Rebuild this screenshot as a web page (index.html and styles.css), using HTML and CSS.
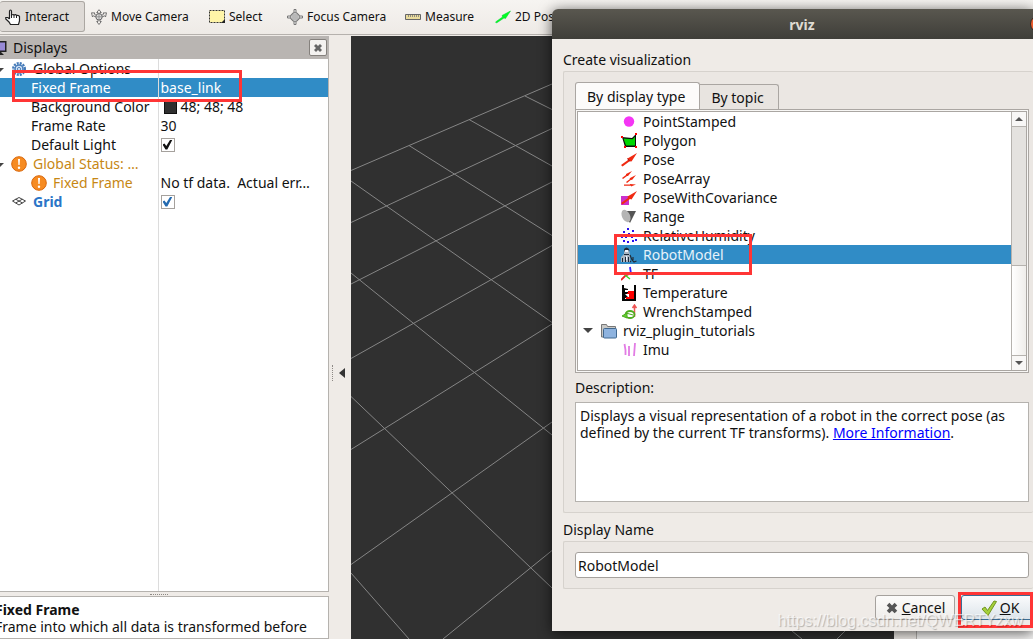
FILE: index.html
```html
<!DOCTYPE html>
<html lang="en">
<head>
<meta charset="utf-8">
<title>rviz</title>
<link rel="stylesheet" href="styles.css">
</head>
<body>
<div class="window">
  <header class="toolbar">
    <button class="tool tool-active" type="button">
      <svg class="icon" viewBox="0 0 16 16"><path d="M4.500 10V2.500q0-1.500 1-1.500t1 1.500V6q2-1 2.500 0q2-1 2.500 .5q2.500-.5 3 1V12l-1 3.500H5.500L4 13L.8 10V8.500h2l1.700 1.500" fill="#fff" stroke="#222" stroke-width="1.200"/><path d="M6.500 5v4M9 6v3M11.500 6.500V9" stroke="#222"/></svg>Interact</button>
    <button class="tool" type="button">
      <svg class="icon" viewBox="0 0 16 16"><path d="M8 .7L10.300 3.500H9V5h-2V3.500H5.700zM8 15.500L5.700 12.500H7V10.500h2v2h1.300zM.5 3.800L4 4l-.8 1L5.500 6.500l-1 1.500L2.500 6.700L1.500 8zM15.500 3.800L12 4l.8 1L10.500 6.500l1 1.500L13.500 6.700L14.500 8z" fill="#f2efec" stroke="#666" stroke-width=".9"/><circle cx="8" cy="7.800" r="3.200" fill="#ddd" stroke="#666"/><path d="M8 4.800v6M5 7.800h6" stroke="#888" stroke-width=".8"/></svg>Move Camera</button>
    <button class="tool" type="button">
      <svg class="icon" viewBox="0 0 16 16"><rect x=".5" y="1.500" width="15" height="12" fill="#fff5a8" stroke="#333" stroke-dasharray="2 1"/><path d="M12 14l4-4v4z" fill="#222"/></svg>Select</button>
    <button class="tool" type="button">
      <svg class="icon" viewBox="0 0 16 16"><path d="M7 .5h2v3l3.500 3.500h3v2h-3L9 12.500v3H7v-3L3.500 9h-3V7h3L7 3.500z" fill="#eee" stroke="#777"/><circle cx="8" cy="8" r="4.500" fill="none" stroke="#777"/><path d="M8 3v10M3 8h10M6 5v6M10 5v6M5 6h6M5 10h6" stroke="#999" stroke-width=".8"/></svg>Focus Camera</button>
    <button class="tool" type="button">
      <svg class="icon" viewBox="0 0 16 16"><path d="M.5 5.500h15v5H.5z" fill="#eadc9c" stroke="#666"/><path d="M3.500 6v2M5.500 6v2M7.500 6v2M9.500 6v2M11.500 6v2M13.500 6v2" stroke="#777" stroke-width=".8"/></svg>Measure</button>
    <button class="tool" type="button">
      <svg class="icon" viewBox="0 0 16 16"><path d="M.5 13l7-5-.5-1.500L15.500 2L10.500 9.500L9 9l-7.500 5z" fill="#0f2" stroke="#0c3" stroke-width=".5"/></svg>2D Pose Estimate</button>
  </header>

  <div class="workspace">
    <aside class="dock">
      <div class="dock-title">
        <svg class="icon" viewBox="0 0 16 16"><rect x=".5" y="1" width="15" height="11" fill="#222"/><path d="M2 2.500h6v8H2z" fill="#8fcf7d"/><path d="M8 2.500h6v8H8z" fill="#9789d6"/><path d="M7 12h3l3 3H4z" fill="#222"/></svg>
        <h2>Displays</h2>
        <button class="close" type="button" aria-label="Close Displays"><svg class="cross" viewBox="0 0 10 10"><path d="M1 3l2-2 2 2 2-2 2 2-2 2 2 2-2 2-2-2-2 2-2-2 2-2z" fill="#666"/></svg></button>
      </div>
      <table class="properties">
        <tbody>
          <tr><td class="top"><span class="arrow"></span><svg class="icon" viewBox="0 0 16 16"><circle cx="8" cy="8" r="5.800" fill="none" stroke="#4379b8" stroke-width="2.400" stroke-dasharray="2 1.040"/><circle cx="8" cy="8" r="4" fill="#cfe0f5" stroke="#4379b8" stroke-width="1.500"/><circle cx="8" cy="8" r="1.500" fill="#fff" stroke="#4379b8"/></svg>Global Options</td><td></td></tr>
          <tr class="selected"><td class="leaf">Fixed Frame</td><td>base_link</td></tr>
          <tr><td class="leaf">Background Color</td><td><span class="swatch"></span>48; 48; 48</td></tr>
          <tr><td class="leaf">Frame Rate</td><td>30</td></tr>
          <tr><td class="leaf"><label for="light">Default Light</label></td><td><input class="check" type="checkbox" id="light" checked></td></tr>
          <tr class="warning"><td class="top"><span class="arrow"></span><svg class="icon" viewBox="0 0 16 16"><circle cx="8" cy="8" r="7.300" fill="#f68b21" stroke="#d9660a"/><path d="M7 3h2l-.4 6H7.400z" fill="#fff"/><circle cx="8" cy="11.700" r="1.200" fill="#fff"/></svg>Global Status: …</td><td></td></tr>
          <tr class="warning"><td class="child"><svg class="icon" viewBox="0 0 16 16"><circle cx="8" cy="8" r="7.300" fill="#f68b21" stroke="#d9660a"/><path d="M7 3h2l-.4 6H7.400z" fill="#fff"/><circle cx="8" cy="11.700" r="1.200" fill="#fff"/></svg>Fixed Frame</td><td class="value">No tf data.&nbsp; Actual err…</td></tr>
          <tr><td class="top"><span class="arrow arrow-none"></span><svg class="icon" viewBox="0 0 16 16"><path d="M1.500 7L8 3.500L14.500 7L8 11zM4.700 5.200L11.500 9M11.300 5.200L4.700 9" fill="none" stroke="#444"/></svg><label class="grid-name" for="grid">Grid</label></td><td><input class="check check-blue" type="checkbox" id="grid" checked></td></tr>
        </tbody>
      </table>
      <div class="rest"></div>
      <div class="splitter"><span class="grip"></span></div>
      <section class="help">
        <h3>Fixed Frame</h3>
        <p>Frame into which all data is transformed before being displayed.</p>
      </section>
    </aside>
    <div class="side-handle"><span class="grip grip-tall"></span><button class="collapse" type="button" aria-label="Collapse panel"></button></div>
    <main class="view">
      <svg class="scene" viewBox="0 0 544 603" preserveAspectRatio="xMinYMin slice">
        <g stroke="#858585" fill="none">
          <path d="M0 134.500L201 48M0 186.500L201 92.500M0 248L201 146M0 322.500L201 209.500M0 413.500L201 288M0 528.500L201 386M92 603L201 514.500"/>
          <path d="M174 60L201 73.500M118 83.500L201 130M58 109.500L201 199.500M0 145L201 286.500M0 237L201 399M0 360.500L201 552M0 537L58 603"/>
          <path d="M441 595l10 8M486 603l8-8"/>
        </g>
      </svg>
    </main>
    <div class="right-handle"></div>
    <aside class="views"></aside>
  </div>

  <section class="dialog" role="dialog" aria-labelledby="dialog-title">
    <div class="titlebar"><h1 id="dialog-title">rviz</h1><button class="window-close" type="button" aria-label="Close"></button></div>
    <div class="dialog-body">
      <h2 class="group-label">Create visualization</h2>
      <div class="group">
        <div class="tabs" role="tablist">
          <button class="tab tab-active" role="tab" aria-selected="true" type="button">By display type</button>
          <button class="tab" role="tab" aria-selected="false" type="button">By topic</button>
        </div>
        <div class="pane">
          <div class="list-frame">
            <ul class="types">
              <li><svg class="icon" viewBox="0 0 16 16"><circle cx="8" cy="7.500" r="5.200" fill="#f436f4"/></svg>PointStamped</li>
              <li><svg class="icon" viewBox="0 0 16 16"><path d="M1 4l10 1 4-4v13H4z" fill="#0c0c0c"/><path d="M2.500 5.500l9 .7 2.500-2.500V12.500H5z" fill="#00d600"/><path d="M0 3h2v2H0zM14 0h2v2h-2zM3 13h2v2H3zM14 13h2v2h-2z" fill="#f00"/></svg>Polygon</li>
              <li><svg class="icon" viewBox="0 0 16 16"><path d="M0 13l7-5-.5-1.500L16 1L10.500 9.500L9 9l-7.500 5.500z" fill="#f02a12"/><path d="M6.500 6.500L9 9.500" stroke="#a11"/></svg>Pose</li>
              <li><svg class="icon" viewBox="0 0 16 16"><path d="M1 7l4-3V3l6-3-4 5H6L2 8zM5 11l4-3-.5-.8L15 4l-4 5-1-.2L6 12zM3 13.500h6V13l6 .5-5 2v-.8H3z" fill="#f02a12"/></svg>PoseArray</li>
              <li><svg class="icon" viewBox="0 0 16 16"><path d="M0 6h8v9H0z" fill="#cb30cb"/><path d="M0 13l7-5-.5-1.500L16 1L10.500 9.500L9 9l-7.500 5.500z" fill="#f02a12"/></svg>PoseWithCovariance</li>
              <li><svg class="icon" viewBox="0 0 16 16"><path d="M1 2h14L9 14z" fill="#555"/><ellipse cx="5" cy="7" rx="4" ry="6.500" fill="#b5b5b5" transform="rotate(-25 5 7)"/></svg>Range</li>
              <li><svg class="icon" viewBox="0 0 16 16"><path d="M6 0h2v2H6zM11 2h2v2h-2zM2 3h2v2H2zM7 5h2v2H7zM14 6h2v2h-2zM0 8h2v2H0zM4 8h2v2H4zM10 8h2v2h-2zM14 11h2v2h-2zM6 13h2v2H6zM11 12h2v2h-2zM2 12h2v2H2z" fill="#2a10ee"/></svg>RelativeHumidity</li>
              <li class="picked"><svg class="icon" viewBox="0 0 16 16"><path d="M3 3q2-4 5 0l1 5v7H0V10l3-3z" fill="#aab6c2"/><path d="M3 2q2.500-3 5 0l.5 2L7 3H4L3 5zM3 7h5v1H3zM1 11h1v4H1zM4 10h1v5H4zM7 10h1v5H7z" fill="#1c2939"/><path d="M4 3h3v2H4zM5 9h1v4H5z" fill="#eef5ff"/><path d="M9 8l2 5 2 2 2.500-1M10 14l-1 1M12 10v3" fill="none" stroke="#222d38" stroke-width="1.200"/></svg><span class="picked-name">RobotModel</span></li>
              <li><svg class="icon" viewBox="0 0 16 16"><path d="M10 8L9 1" stroke="#32f" stroke-width="1.800"/><path d="M9 7h7" stroke="#0d0" stroke-width="1.500"/><path d="M0 14l4-4 6-3" fill="none" stroke="#e22" stroke-width="1.800"/><path d="M4 9l5 4" stroke="#3d2" stroke-width="1.500"/></svg>TF</li>
              <li><svg class="icon" viewBox="0 0 16 16"><path d="M1 0h2v3l4 1v1H4v2h3v2H4l3 3v1H4v1h9V0h2v16H1z" fill="#050505"/><path d="M7 6h6v8H5v-2h3V9H6V8h1z" fill="#f00"/></svg>Temperature</li>
              <li><svg class="icon" viewBox="0 0 16 16"><path d="M13.500 13V2M11.500 4L13.500 1l2 3" stroke="#e55" stroke-width="1.500" fill="none"/><ellipse cx="9" cy="10.500" rx="4.500" ry="3.500" fill="none" stroke="#4fae21" stroke-width="1.800"/><path d="M1 12l5-3v5zM5 9l7 2" fill="#62ce32" stroke="#4fae21"/></svg>WrenchStamped</li>
              <li class="folder"><span class="arrow"></span><svg class="icon" viewBox="0 0 16 16"><path d="M.5 14V1.500h5l1 2h8V14z" fill="#c9c9c6" stroke="#777"/><rect x="2.500" y="5.500" width="13" height="9.500" rx="1" fill="#8eb3df" stroke="#41688f"/></svg>rviz_plugin_tutorials</li>
              <li><svg class="icon" viewBox="0 0 16 16"><path d="M3.500 2l1 6v5M8 4v10M14 1l-1 13" fill="none" stroke="#e27ce4" stroke-width="1.800"/></svg>Imu</li>
            </ul>
            <div class="scrollbar"><button class="step" type="button" aria-label="Scroll up"><span class="up"></span></button><div class="track"></div><div class="thumb"></div><button class="step" type="button" aria-label="Scroll down"><span class="down"></span></button></div>
          </div>
        </div>
        <h3 class="description-label">Description:</h3>
        <div class="description">Displays a visual representation of a robot in the correct pose (as defined by the current TF transforms). <a href="#more">More Information</a>.</div>
      </div>
      <label class="group-label" for="name">Display Name</label>
      <div class="group"><input class="name" id="name" type="text" value="RobotModel"></div>
      <div class="actions">
        <button class="action" type="button"><svg class="action-icon" viewBox="0 0 16 16"><path d="M2 5l3-3 3 3 3-3 3 3-3 3 3 3-3 3-3-3-3 3-3-3 3-3z" fill="#555"/></svg><span><u>C</u>ancel</span></button>
        <button class="action action-main" type="button"><svg class="icon" viewBox="0 0 16 16"><path d="M1 9l3-2 2.500 3.500L13 1l2.500 .5L7 15.500z" fill="#a5d03b" stroke="#70951f"/></svg><span><u>O</u>K</span></button>
      </div>
    </div>
  </section>
  <div class="mark mark-frame"></div>
  <div class="mark mark-model"></div>
  <div class="mark mark-ok"></div>
  <div class="watermark">https://blog.csdn.net/QWERTYzxw</div>
</div>
</body>
</html>
```
FILE: styles.css
```css
* { box-sizing: border-box; }
body { margin: 0; font: 14px/19px "Noto Sans", "Open Sans", sans-serif; color: #111; }
h1, h2, h3, p, ul { margin: 0; padding: 0; font-size: inherit; font-weight: normal; }
button, input { font: inherit; color: inherit; margin: 0; padding: 0; }
.window { position: relative; display: flex; flex-direction: column; height: 100vh; overflow: hidden; background: #efebe7; }
.icon { width: 16px; height: 16px; flex: none; }

.toolbar { display: grid; grid-template-columns: 85px 118px 78px 118px 90px auto; justify-content: start; height: 35px; padding: 1px 0 2px; flex: none; border-bottom: 1px solid #b5b1ad; background: linear-gradient(#f6f4f1, #eeeae6); font-size: 12px; }
.tool { display: flex; align-items: center; gap: 4px; padding: 0 6px; border: 0; background: none; white-space: nowrap; }
.tool-active { padding: 0 5px; border: 1px solid #aba7a2; border-left: 0; border-radius: 3px; background: #dedad6; }

.workspace { display: flex; flex: 1; min-height: 0; margin: 1px 0 0 -12px; }
.dock { display: flex; flex-direction: column; width: 341px; flex: none; }
.dock-title { display: flex; align-items: center; gap: 6px; height: 23px; padding: 0 2px 0 3px; flex: none; background: #b9b5b2; }
.dock-title h2 { flex: 1; }
.close { display: grid; place-items: center; width: 18px; height: 17px; border: 1px solid #85817d; border-radius: 2px; background: #f4f2f0; }
.cross { width: 10px; height: 10px; }
.properties { width: 100%; table-layout: fixed; border-collapse: collapse; background: #fff; border-right: 1px solid #b5b2ae; }
.properties tr { height: 19px; }
.properties td { height: 19px; padding: 0 0 0 2px; vertical-align: middle; white-space: nowrap; line-height: 19px; overflow: hidden; }
.properties td:first-child { width: 170px; border-right: 1px solid #dcdcdc; }
.properties td.leaf { padding-left: 43px; }
.properties td.top { padding-left: 8px; }
.properties td.child { padding-left: 43px; }
.properties .icon { margin-right: 6px; vertical-align: -3px; }
.selected { background: #308cc6; color: #fff; }
.warning td:first-child { color: #c78714; }
.arrow { display: inline-block; border: 5px solid transparent; border-top-color: #444; border-bottom: 0; vertical-align: 2px; margin-right: 7px; }
.arrow-none { visibility: hidden; }
.properties .arrow { border-width: 4px 4px 0; }
.swatch { display: inline-block; width: 13px; height: 13px; margin: 0 4px 0 3px; background: #303030; border: 1px solid #111; vertical-align: -2px; }
.check { appearance: none; position: relative; display: block; width: 14px; height: 14px; border: 1px solid #a5a19d; background: #fff; color: #111; }
.check:checked::after { content: ""; display: block; width: 10px; height: 10px; margin: 1px; background: currentColor; clip-path: polygon(0 50%, 20% 40%, 38% 65%, 78% 0, 100% 0, 48% 100%, 30% 100%); }
.check-blue { color: #246ab0; }
.grid-name { color: #2a75c7; font-weight: bold; }
.rest { flex: 1; border: solid #b5b2ae; border-width: 0 1px 1px 0; background: linear-gradient(#dcdcdc, #dcdcdc) 170px 0 / 1px 100% no-repeat #fff; }
.splitter { display: grid; place-items: center; height: 4px; flex: none; }
.grip { width: 18px; border-top: 1px dotted #8d8985; }
.grip-tall { width: 0; height: 16px; border-top: 0; border-left: 1px dotted #8d8985; }
.help { height: 43px; flex: none; overflow: hidden; padding: 4px 4px 0 6px; border: 1px solid #b5b2ae; background: #fff; line-height: 17px; }
.help h3 { font-weight: bold; }
.side-handle { display: flex; align-items: center; gap: 6px; width: 22px; padding: 0 3px; margin-top: 70px; flex: none; }
.collapse { width: 6px; height: 10px; border: solid transparent; border-width: 5px 6px 5px 0; border-right-color: #333; background: none; }
.view { flex: 1; min-width: 0; background: #303030; overflow: hidden; }
.scene { display: block; width: 100%; height: 100%; }
.right-handle { width: 22px; flex: none; }
.views { width: 117px; flex: none; background: #f7f6f5; border-left: 1px solid #b5b2ae; }

.dialog { position: absolute; left: 552px; right: 0; top: 9px; background: #efebe7; border-radius: 6px 0 0 0; box-shadow: 0 2px 14px rgba(0, 0, 0, .65); }
.titlebar { display: flex; align-items: center; height: 30px; padding-left: 22px; border-radius: 6px 0 0 0; background: linear-gradient(#59574f, #3f3e39); color: #dfdbd2; overflow: hidden; }
.titlebar h1 { flex: 1; text-align: center; font-weight: bold; }
.window-close { width: 18px; height: 18px; margin-right: -15px; border: 1px solid #302c27; border-radius: 50%; background: #ed5b2d; flex: none; }
.dialog-body { padding: 11px 0 11px 11px; }
.group-label { display: block; height: 21px; }
.group { padding: 10px 4px 10px 11px; border: 1px solid #d6d2cd; border-right: 0; border-radius: 2px; background: #ebe7e3; }
.group + .group-label { margin-top: 7px; }
.tabs { display: flex; align-items: flex-end; height: 27px; }
.tab { height: 25px; padding: 0 14px 0 11px; border: 1px solid #aaa6a2; border-left: 0; border-bottom: 0; border-radius: 0 3px 0 0; background: #e8e4e0; }
.tab-active { height: 27px; border-left: 1px solid #aaa6a2; border-radius: 3px 3px 0 0; background: #fcfbfa; }
.pane { padding: 1px; border: 1px solid #aaa6a2; background: #f8f7f5; }
.list-frame { display: flex; height: 260px; border: 1px solid #aaa6a2; background: #fff; }
.types { flex: 1; list-style: none; overflow: hidden; }
.types li { display: flex; align-items: center; gap: 6px; height: 19px; padding-left: 43px; }
.types .folder { padding-left: 5px; gap: 6px; }
.types .arrow { margin-right: 2px; }
.types .picked { background: #308cc6; color: #e6f2fa; }
.picked-name { flex: 1; }
.scrollbar { display: flex; flex-direction: column; width: 15px; border-left: 1px solid #b5b2ae; }
.step { display: grid; place-items: center; height: 14px; border: 0; background: #f8f7f6; }
.up, .down { border: 4px solid transparent; }
.up { border-top: 0; border-bottom-color: #555; }
.down { border-bottom: 0; border-top-color: #555; }
.track { flex: 1; border: solid #b5b2ae; border-width: 1px 0; background: #e4e2df; }
.thumb { flex: 0 0 90px; border-bottom: 1px solid #b5b2ae; background: linear-gradient(90deg, #fff, #efedea); }
.description-label { height: 29px; padding-top: 5px; }
.description { height: 100px; padding: 4px; border: 1px solid #b5b2ae; background: #fff; line-height: 17px; }
.description a { color: #00f; }
.name { display: block; width: 100%; height: 26px; padding: 0 2px; border: 1px solid #a5a19d; border-radius: 3px; background: #fff; }
.actions { display: flex; justify-content: flex-end; gap: 6px; padding-top: 6px; margin-right: -10px; }
.action { display: flex; align-items: center; justify-content: center; gap: 3px; width: 80px; height: 25px; border: 1px solid #a5a19d; border-radius: 3px; background: linear-gradient(#fcfbfa, #efedea); }
.action-main { width: 82px; padding-right: 4px; border-color: #3b6d94; background: linear-gradient(#fafbfc, #dce4ea); }
.action-icon { width: 14px; height: 14px; }

.mark { position: absolute; border: 3px solid #ff3535; pointer-events: none; }
.mark-frame { left: 12px; top: 70px; width: 230px; height: 32px; }
.mark-model { left: 614px; top: 234px; width: 138px; height: 41px; }
.mark-ok { right: 0; top: 592px; width: 75px; height: 36px; }
.watermark { position: absolute; right: 10px; top: 611px; font: 16px/20px "Liberation Sans", sans-serif; color: rgba(255, 255, 255, .65); text-shadow: 1px 1px 1px rgba(0, 0, 0, .25); }
```
